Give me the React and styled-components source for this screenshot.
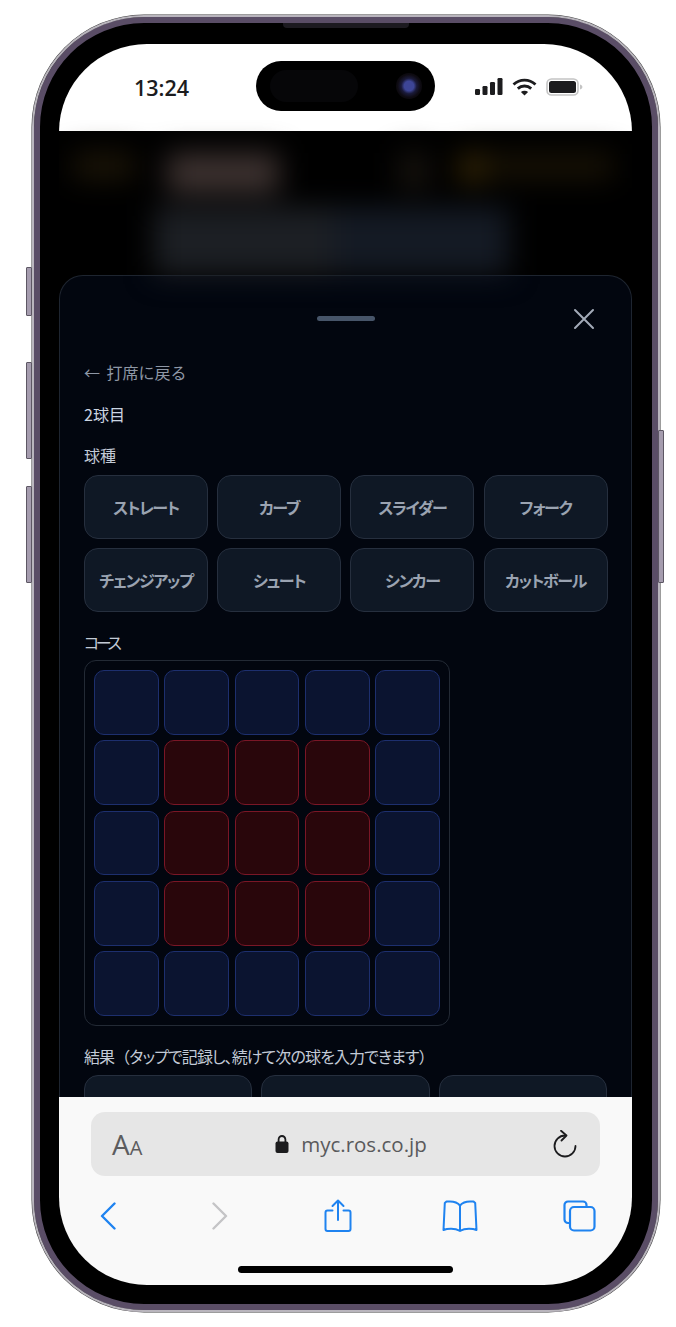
import styled, { createGlobalStyle } from "styled-components"

const pitches = ["ストレート", "カーブ", "スライダー", "フォーク", "チェンジアップ", "シュート", "シンカー", "カットボール"]
const strike = (row, col) => row > 0 && row < 4 && col > 0 && col < 4
const cells = Array.from({ length: 25 }, (_, i) => strike(Math.floor(i / 5), i % 5))

const App = () => {
  return (
    <>
      <GlobalStyle />
      <Stage>
        <Phone>
          <SideButton $side="left" $top={250} $height={49} />
          <SideButton $side="left" $top={345} $height={97} />
          <SideButton $side="left" $top={469} $height={97} />
          <SideButton $side="right" $top={413} $height={153} />
          <Speaker />
          <Screen>
            <StatusBar>
              <Time>13:24</Time>
              <Island>
                <IslandPill />
                <Lens />
              </Island>
              <StatusIcons>
                <svg width="28" height="18" viewBox="0 0 28 18" fill="#1c1c1e">
                  <rect x="0" y="11" width="5" height="6" rx="1.2" />
                  <rect x="7.5" y="8" width="5" height="9" rx="1.2" />
                  <rect x="15" y="4" width="5" height="13" rx="1.2" />
                  <rect x="22.5" y="0" width="5" height="17" rx="1.2" />
                </svg>
                <svg width="25" height="18" viewBox="0 0 25 18" fill="none" stroke="#1c1c1e" strokeWidth="2.8">
                  <path d="M1.5 6.5C7.8 .6 17.2 .6 23.5 6.5" />
                  <path d="M5.8 10.6C9.6 7.1 15.4 7.1 19.2 10.6" />
                  <path d="M12.5 17.5l-3.6-3.6c2-1.7 5.2-1.7 7.2 0z" fill="#1c1c1e" stroke="none" />
                </svg>
                <svg width="37" height="18" viewBox="0 0 37 18">
                  <rect x="1" y="1" width="31" height="16" rx="4.5" fill="none" stroke="#c4c4c4" strokeWidth="1.6" />
                  <rect x="3" y="3" width="27" height="12" rx="2.5" fill="#1c1c1e" />
                  <path d="M34 6.5c1.6.4 2.4 1.3 2.4 2.5s-.8 2.1-2.4 2.5z" fill="#c4c4c4" />
                </svg>
              </StatusIcons>
            </StatusBar>

            <Viewport>
              <Backdrop>
                <BlurRow>
                  <Blob $w={62} $h={26} $c="#1c1507" $ml={14} />
                  <Blob $w={112} $h={40} $c="#3d3230" $ml={32} />
                  <Blob $w={30} $h={36} $c="#17130e" $ml={120} />
                  <Blob $w={24} $h={30} $c="#352605" $ml={30} />
                  <Blob $w={130} $h={26} $c="#181205" />
                </BlurRow>
                <BlurRow>
                  <Blob $w={180} $h={90} $c="#1c1f24" $ml={95} />
                  <Blob $w={175} $h={90} $c="#141a24" />
                </BlurRow>
              </Backdrop>

              <Sheet>
                <SheetHeader>
                  <span />
                  <Handle />
                  <CloseButton aria-label="閉じる">
                    <svg width="22" height="22" viewBox="0 0 22 22" stroke="#a3abb8" strokeWidth="2" strokeLinecap="round">
                      <path d="M2 2l18 18M20 2L2 20" />
                    </svg>
                  </CloseButton>
                </SheetHeader>

                <BackLink>← 打席に戻る</BackLink>
                <Count>2球目</Count>

                <Label>球種</Label>
                <PitchGrid>
                  {pitches.map((name) => (
                    <Chip key={name}>{name}</Chip>
                  ))}
                </PitchGrid>

                <CourseLabel>コース</CourseLabel>
                <CourseBox>
                  {cells.map((isStrike, i) => (
                    <Cell key={i} $strike={isStrike} />
                  ))}
                </CourseBox>

                <ResultLabel>
                  結果<Paren>（</Paren>タップで記録し、続けて次の球を入力できます<Paren>）</Paren>
                </ResultLabel>
                <ResultGrid>
                  <ResultButton />
                  <ResultButton />
                  <ResultButton />
                </ResultGrid>
              </Sheet>
            </Viewport>

            <Chrome>
              <UrlBar>
                <TextSize>
                  A<small>A</small>
                </TextSize>
                <Address>
                  <svg width="14" height="20" viewBox="0 0 14 20" fill="#1c1c1e">
                    <path d="M3.6 8V5.4a3.4 3.4 0 0 1 6.8 0V8" fill="none" stroke="#1c1c1e" strokeWidth="1.8" />
                    <rect x="0.5" y="7.5" width="13" height="11.5" rx="2" />
                  </svg>
                  myc.ros.co.jp
                </Address>
                <svg width="26" height="28" viewBox="0 0 26 28" fill="none" stroke="#1c1c1e" strokeWidth="1.8" strokeLinecap="round" strokeLinejoin="round">
                  <path d="M13 5.5A10.5 10.5 0 1 0 23.5 16" />
                  <path d="M9 .8l5.5 4.7-5 5" />
                </svg>
              </UrlBar>

              <Toolbar>
                <svg width="16" height="28" viewBox="0 0 16 28" fill="none" stroke="#1f83f0" strokeWidth="2.4" strokeLinecap="round" strokeLinejoin="round">
                  <path d="M14.5 1.5L2 14l12.5 12.5" />
                </svg>
                <svg width="16" height="28" viewBox="0 0 16 28" fill="none" stroke="#c4c4c6" strokeWidth="2.4" strokeLinecap="round" strokeLinejoin="round">
                  <path d="M1.5 1.5L14 14 1.5 26.5" />
                </svg>
                <svg width="28" height="34" viewBox="0 0 28 34" fill="none" stroke="#1f83f0" strokeWidth="2" strokeLinecap="round" strokeLinejoin="round">
                  <path d="M8.5 11.5H3.5a2 2 0 0 0-2 2V30a2 2 0 0 0 2 2h21a2 2 0 0 0 2-2V13.5a2 2 0 0 0-2-2h-5" />
                  <path d="M14 21V1.5M8.5 7L14 1.5 19.5 7" />
                </svg>
                <svg width="36" height="32" viewBox="0 0 36 32" fill="none" stroke="#1f83f0" strokeWidth="2" strokeLinecap="round" strokeLinejoin="round">
                  <path d="M18 5.5C15.5 2.5 12 1.5 8 1.5H4.5L2.8 3 1.5 30c4-1.6 11-2 16.5 .8 5.5-2.8 12.5-2.4 16.5-.8L33.2 3l-1.7-1.5H28c-4 0-7.5 1-10 4z" />
                  <path d="M18 5.5v25" />
                </svg>
                <svg width="33" height="32" viewBox="0 0 33 32" fill="none" stroke="#1f83f0" strokeWidth="2.2" strokeLinejoin="round">
                  <path d="M6.5 23H5a3.5 3.5 0 0 1-3.5-3.5V5A3.5 3.5 0 0 1 5 1.5h15A3.5 3.5 0 0 1 23.5 5v2" />
                  <rect x="7" y="7" width="24.5" height="23.5" rx="4" />
                </svg>
              </Toolbar>
              <HomeBar />
            </Chrome>
          </Screen>
        </Phone>
      </Stage>
    </>
  )
}

export default App

const GlobalStyle = createGlobalStyle`
  html, body {
    margin: 0;
    background: #fff;
  }
  * {
    box-sizing: border-box;
  }
`

const Stage = styled.div`
  width: 676px;
  height: 1327px;
  padding: 15px 0 0 32px;
  overflow: hidden;
  font-family: "Noto Sans CJK JP", "Noto Sans", sans-serif;
`

const Phone = styled.div`
  position: relative;
  width: 628px;
  height: 1297px;
  padding: 27px 26px;
  padding-left: 25px;
  border: 2px solid #b9b5bd;
  border-radius: 112px;
  background: #000;
  box-shadow: inset 0 0 0 6px #5a4d66, 0 0 0 0.5px #3a3a3a;
`

const SideButton = styled.div`
  position: absolute;
  ${(p) => (p.$side === "left" ? "left: -8px;" : "right: -6px;")}
  top: ${(p) => p.$top}px;
  width: 6px;
  height: ${(p) => p.$height}px;
  background: #a59cae;
  border: 1px solid #5d5764;
  border-radius: 1px;
`

const Speaker = styled.div`
  position: absolute;
  top: 6px;
  left: 249px;
  width: 126px;
  height: 5px;
  background: #1c1a20;
  border-radius: 0 0 4px 4px;
`

const Screen = styled.div`
  display: flex;
  flex-direction: column;
  width: 573px;
  height: 1241px;
  border-radius: 88px;
  overflow: hidden;
  background: #000;
`

const StatusBar = styled.div`
  flex: 0 0 87px;
  display: flex;
  align-items: flex-start;
  background: #fff;
  padding: 17px 0 0 197px;
  position: relative;
`

const Time = styled.div`
  position: absolute;
  left: 75px;
  top: 29px;
  font: 600 21.5px/30px "Open Sans", sans-serif;
  color: #1c1c1e;
`

const Island = styled.div`
  width: 179px;
  height: 50px;
  border-radius: 25px;
  background: #000;
  display: flex;
  align-items: center;
  justify-content: space-between;
  padding: 0 14px;
`

const IslandPill = styled.div`
  width: 88px;
  height: 32px;
  border-radius: 16px;
  background: #060608;
`

const Lens = styled.div`
  width: 26px;
  height: 26px;
  margin-right: -1px;
  border-radius: 50%;
  background: radial-gradient(circle, #3d4596 0 26%, #1a1a3a 42%, #0e0b12 62%, #000 100%);
`

const StatusIcons = styled.div`
  display: flex;
  align-items: center;
  gap: 9px;
  margin: 17px 0 0 40px;
`

const Viewport = styled.div`
  flex: 1;
  min-height: 0;
  display: flex;
  flex-direction: column;
  background: #000;
`

const Backdrop = styled.div`
  flex: 0 0 144px;
  display: flex;
  flex-direction: column;
  gap: 14px;
  padding-top: 22px;
  overflow: hidden;
  filter: blur(14px);
`

const BlurRow = styled.div`
  display: flex;
  align-items: flex-start;
`

const Blob = styled.div`
  flex: 0 0 ${(p) => p.$w}px;
  height: ${(p) => p.$h}px;
  margin-left: ${(p) => p.$ml || 0}px;
  background: ${(p) => p.$c};
`

const Sheet = styled.div`
  flex: 1;
  min-height: 0;
  overflow: hidden;
  padding: 0 24px;
  border: 1px solid #1e2530;
  border-bottom: 0;
  border-radius: 24px 24px 0 0;
  background: #02060f;
`

const SheetHeader = styled.div`
  display: grid;
  grid-template-columns: 1fr auto 1fr;
  align-items: center;
  height: 84px;
`

const Handle = styled.div`
  width: 58px;
  height: 5px;
  border-radius: 3px;
  background: #475569;
`

const CloseButton = styled.button`
  justify-self: end;
  display: flex;
  padding: 2px 12px 0 0;
  border: 0;
  background: none;
`

const BackLink = styled.div`
  height: 24px;
  font-size: 16px;
  line-height: 24px;
  word-spacing: 3px;
  color: #8e97a5;
`

const Count = styled.div`
  height: 24px;
  margin-top: 18px;
  font-size: 16px;
  line-height: 24px;
  color: #cbd5e1;
`

const Label = styled.div`
  height: 24px;
  margin-top: 17px;
  font-size: 16px;
  line-height: 24px;
  color: #c2cad6;
`

const PitchGrid = styled.div`
  display: grid;
  grid-template-columns: repeat(4, 124px);
  column-gap: 9.2px;
  row-gap: 9px;
  margin-top: 8px;
`

const Chip = styled.button`
  height: 64px;
  padding: 0;
  border: 1px solid #262f3e;
  border-radius: 14px;
  background: #0f1825;
  color: #9aa3b1;
  font: 700 16px "Noto Sans CJK JP", sans-serif;
  font-feature-settings: "palt";
  letter-spacing: -1.3px;
`

const CourseLabel = styled(Label)`
  margin-top: 18px;
  font-feature-settings: "palt";
  letter-spacing: -3.3px;
`

const CourseBox = styled.div`
  display: grid;
  grid-template-columns: repeat(5, 1fr);
  gap: 5.7px;
  width: 366px;
  height: 366px;
  margin-top: 6px;
  padding: 9px;
  border: 1px solid #232a35;
  border-radius: 12px;
`

const Cell = styled.div`
  border-radius: 10px;
  border: 1px solid ${(p) => (p.$strike ? "#7a1626" : "#1d2f6e")};
  background: ${(p) => (p.$strike ? "#29060b" : "#0b1430")};
`

const ResultLabel = styled(Label)`
  margin-top: 18px;
  font-feature-settings: "palt";
  letter-spacing: -0.9px;
`

const Paren = styled.span`
  font-feature-settings: normal;
`

const ResultGrid = styled.div`
  display: grid;
  grid-template-columns: repeat(3, 1fr);
  gap: 9px;
  margin-top: 7px;
`

const ResultButton = styled.div`
  height: 64px;
  border: 1px solid #262f3e;
  border-radius: 14px;
  background: #0f1825;
`

const Chrome = styled.div`
  flex: 0 0 188px;
  display: flex;
  flex-direction: column;
  background: #f9f9f9;
  padding-top: 15px;
`

const UrlBar = styled.div`
  display: flex;
  align-items: center;
  justify-content: space-between;
  width: 509px;
  height: 64px;
  margin-left: 32px;
  padding: 0 22px 0 21px;
  border-radius: 14px;
  background: #e6e6e6;
`

const TextSize = styled.div`
  width: 60px;
  font: 400 28px "Open Sans", sans-serif;
  color: #5c5c5e;

  small {
    font-size: 20px;
  }
`

const Address = styled.div`
  display: flex;
  align-items: center;
  gap: 12px;
  margin-right: 22px;
  font: 400 20.5px "Open Sans", sans-serif;
  color: #5a5a5c;
`

const Toolbar = styled.div`
  display: grid;
  grid-template-columns: 98px 126px 110px 133px 106px;
  justify-items: center;
  align-items: center;
  height: 44px;
  margin-top: 18px;
`

const HomeBar = styled.div`
  width: 215px;
  height: 7px;
  margin: 28px 0 0 179px;
  border-radius: 4px;
  background: #000;
`
